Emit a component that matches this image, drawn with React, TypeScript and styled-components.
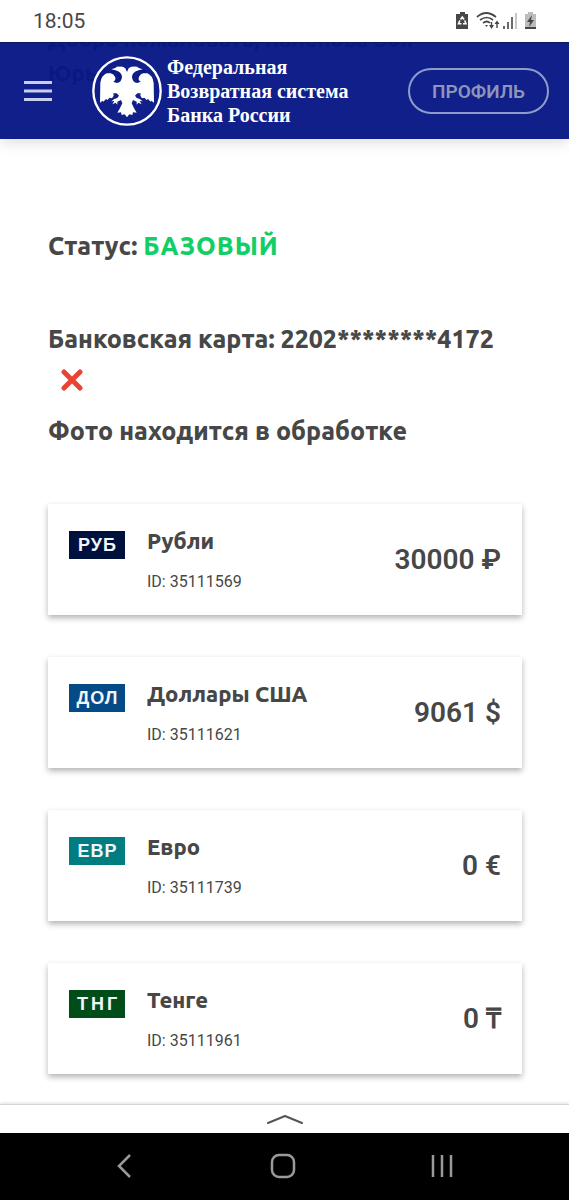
import React from "react";
import styled, { createGlobalStyle } from "styled-components";

const heading = `"Ubuntu", "Noto Sans", sans-serif`;
const body = `Roboto, "Liberation Sans", sans-serif`;
const ink = "#474747";

const GlobalStyle = createGlobalStyle`
  *, *::before, *::after { box-sizing: border-box; }
  body { margin: 0; background: #fff; color: ${ink}; font-family: ${body}; }
  h1, h2, p, ul { margin: 0; padding: 0; }
  button { border: 0; padding: 0; background: none; font: inherit; color: inherit; cursor: pointer; }
  svg { display: block; }
`;

const Screen = styled.div`
  display: flex;
  flex-direction: column;
  min-height: 100vh;
`;

const StatusBar = styled.div`
  display: flex;
  align-items: center;
  justify-content: space-between;
  height: 42px;
  padding: 0 32px 0 33px;
  font-size: 21px;
`;

const Page = styled.div`
  flex: 1;
  display: grid;
  grid-template-columns: minmax(0, 1fr);
  align-items: start;
  overflow: hidden;
`;

const Header = styled.header`
  grid-area: 1 / 1;
  z-index: 1;
  display: flex;
  align-items: center;
  height: 97px;
  padding: 0 20px 0 24px;
  background: rgba(6, 22, 133, 0.96);
  border-top: 1px solid #0a1660;
  box-shadow: 0 3px 14px rgba(0, 0, 0, 0.14);
`;

const MenuButton = styled.button`
  width: 28px;
  margin-right: 40px;
`;

const Brand = styled.a`
  display: flex;
  align-items: center;
  gap: 5px;
  color: #fff;
  text-decoration: none;
  font: bold 20px/24px "Liberation Serif", "Times New Roman", serif;
  white-space: nowrap;
`;

const BrandName = styled.span`
  display: flex;
  flex-direction: column;
`;

const ProfileButton = styled.button`
  height: 46px;
  margin-left: auto;
  padding: 0 22px;
  border: 2px solid #8f9ccb;
  border-radius: 23px;
  color: #8d95b8;
  font-size: 19px;
  font-weight: 600;
`;

const Content = styled.main`
  grid-area: 1 / 1;
  display: flex;
  flex-direction: column;
  min-width: 0;
  margin-top: -20px;
  padding: 0 47px 28px 48px;
`;

const Greeting = styled.h1`
  max-width: 420px;
  margin-bottom: 135px;
  font: bold 22px/34px ${heading};
`;

const Line = styled.p<{ $gap: number }>`
  margin-bottom: ${(p) => p.$gap}px;
  font: 800 25px/42px ${heading};
`;

const Status = styled.span`
  color: #13ce66;
  letter-spacing: 1px;
`;

const CrossIcon = styled.svg`
  margin: 9px 0 19px 13px;
`;

const Accounts = styled.ul`
  display: flex;
  flex-direction: column;
  gap: 42px;
  list-style: none;
`;

const Card = styled.li`
  display: flex;
  align-items: center;
  gap: 22px;
  height: 111px;
  padding: 0 21px;
  background: #fff;
  box-shadow: 0 3px 6px rgba(0, 0, 0, 0.3);
`;

const Badge = styled.span<{ $color: string; $wide?: boolean }>`
  align-self: flex-start;
  width: 56px;
  margin-top: 27px;
  background: ${(p) => p.$color};
  color: #f2f5fa;
  font: bold 18px/28px "Liberation Sans", Arial, sans-serif;
  letter-spacing: ${(p) => (p.$wide ? 3 : 1)}px;
  text-indent: ${(p) => (p.$wide ? 3 : 1)}px;
  text-align: center;
`;

const Details = styled.div`
  flex: 1;
  display: flex;
  flex-direction: column;
  gap: 13px;
  padding-top: 4px;
`;

const Currency = styled.h2`
  font: 800 22px/28px ${heading};
`;

const AccountId = styled.p`
  font-size: 16px;
  line-height: 28px;
`;

const Amount = styled.p`
  font-size: 28px;
  font-weight: 600;
  line-height: 32px;
`;

const Sheet = styled.div`
  display: flex;
  justify-content: center;
  border-top: 1px solid #d6d6d6;
  box-shadow: 0 -1px 3px rgba(0, 0, 0, 0.12);
  background: #fff;
  z-index: 1;
`;

const SheetHandle = styled.button`
  padding: 9px 0 8px;
`;

const NavBar = styled.nav`
  display: flex;
  align-items: center;
  justify-content: space-around;
  height: 67px;
  padding: 0 48px 2px 44px;
  background: #000;
`;

const NavButton = styled.button`
  padding: 4px 20px;
`;

const accounts = [
  { code: "РУБ", color: "#00103c", name: "Рубли", id: "35111569", amount: "30000 ₽" },
  { code: "ДОЛ", color: "#044a86", name: "Доллары США", id: "35111621", amount: "9061 $" },
  { code: "ЕВР", color: "#007d80", name: "Евро", id: "35111739", amount: "0 €" },
  { code: "ТНГ", color: "#004d1a", name: "Тенге", id: "35111961", amount: "0 ₸", wide: true },
];

const eagleHalf =
  "M127 66 L122 55 Q116 49 106 50 Q96 49 92 54 L80 58 L92 61 Q111 66 112 80 Q111 97 96 99 L86 95 Q95 90 91 80 Q86 71 78 70 L66 70 Q50 77 47 98 L46 158 L54 152 L56 155 L64 147 L68 150 L75 143 L82 145 L87 137 L86 130 L96 130 L103 137 Q98 147 90 146 L80 154 L89 153 L83 163 L93 158 L98 164 L98 155 L109 150 L113 160 L105 176 L98 188 L109 187 L111 195 L120 193 L127 202 Z";

const EagleLogo = () => (
  <svg width="70" height="70" viewBox="22 18 210 210" fill="#fff" aria-hidden="true">
    <circle cx="127" cy="123" r="101" fill="none" stroke="#fff" strokeWidth="7" />
    <path d={eagleHalf} />
    <path d={eagleHalf} transform="translate(254 0) scale(-1 1)" />
  </svg>
);

const StatusIcons = () => (
  <svg width="82" height="20" viewBox="0 0 82 20" fill="none" aria-hidden="true">
    <path d="M5 1h5v2h3v15H1V3h4z" fill="#474747" />
    <path d="M5.5 8.5L7.3 6l1.8 2.5M4.8 9.5L3.5 12.8h3M8 12.8h3L9.7 9.5" stroke="#fff" strokeWidth="1.6" />
    <g stroke="#474747" strokeWidth="1.7">
      <path d="M22 6Q31-2 41 6M25 9Q32 4 38 9M28 12Q32 9 35 12" />
      <path d="M36.5 11v5M42 12v5" strokeWidth="1.4" />
    </g>
    <path d="M30 14h3l-1.5 2zM34 14h5l-2.5 4zM39.5 13h5L42 9.5z" fill="#474747" />
    <g strokeWidth="1.6">
      <path d="M49 15v3M53 11v7M57 6v12" stroke="#474747" />
      <path d="M61 2v16" stroke="#bbb" />
    </g>
    <path d="M73 1h5v2h3v13H70V3h3z" fill="#bdbdbd" />
    <path d="M70 16h11v2H70zM77 4l-5 7h3l-1 5 5-7h-3z" fill="#474747" />
  </svg>
);

export default function App() {
  return (
    <>
      <GlobalStyle />
      <Screen>
        <StatusBar>
          <time>18:05</time>
          <StatusIcons />
        </StatusBar>
        <Page>
          <Header>
            <MenuButton aria-label="Меню">
              <svg width="28" height="20" viewBox="0 0 28 20" stroke="#c9cdf0" strokeWidth="3">
                <path d="M0 1.5h28M0 10h28M0 18.5h28" />
              </svg>
            </MenuButton>
            <Brand href="#">
              <EagleLogo />
              <BrandName>
                <span>Федеральная</span>
                <span>Возвратная система</span>
                <span>Банка России</span>
              </BrandName>
            </Brand>
            <ProfileButton>ПРОФИЛЬ</ProfileButton>
          </Header>
          <Content>
            <Greeting>
              Добро пожаловать, Халенова Зоя
              <br />
              Юрьевна
            </Greeting>
            <Line $gap={51}>
              Статус: <Status>БАЗОВЫЙ</Status>
            </Line>
            <Line $gap={0}>Банковская карта: 2202********4172</Line>
            <CrossIcon width="22" height="22" viewBox="0 0 22 22" role="img" aria-label="Не подтверждена">
              <path d="M3 3l16 16M19 3L3 19" stroke="#ea4335" strokeWidth="5" strokeLinecap="round" />
            </CrossIcon>
            <Line $gap={52}>Фото находится в обработке</Line>
            <Accounts>
              {accounts.map((a) => (
                <Card key={a.id}>
                  <Badge $color={a.color} $wide={a.wide}>{a.code}</Badge>
                  <Details>
                    <Currency>{a.name}</Currency>
                    <AccountId>ID: {a.id}</AccountId>
                  </Details>
                  <Amount>{a.amount}</Amount>
                </Card>
              ))}
            </Accounts>
          </Content>
        </Page>
        <Sheet>
          <SheetHandle aria-label="Развернуть">
            <svg width="38" height="11" viewBox="0 0 38 11" fill="none" stroke="#555" strokeWidth="2" strokeLinecap="round" strokeLinejoin="round">
              <path d="M2 9l17-7 17 7" />
            </svg>
          </SheetHandle>
        </Sheet>
        <NavBar>
          <NavButton aria-label="Назад">
            <svg width="26" height="26" viewBox="0 0 26 26" fill="none" stroke="#9a9a9a" strokeWidth="2.5">
              <path d="M19 2L8 13l11 11" />
            </svg>
          </NavButton>
          <NavButton aria-label="Домой">
            <svg width="26" height="26" viewBox="0 0 26 26" fill="none" stroke="#9a9a9a" strokeWidth="2.5">
              <rect x="2" y="2" width="22" height="22" rx="7" />
            </svg>
          </NavButton>
          <NavButton aria-label="Недавние">
            <svg width="26" height="26" viewBox="0 0 26 26" fill="none" stroke="#9a9a9a" strokeWidth="2.5">
              <path d="M4 2v22M13 2v22M22 2v22" />
            </svg>
          </NavButton>
        </NavBar>
      </Screen>
    </>
  );
}
